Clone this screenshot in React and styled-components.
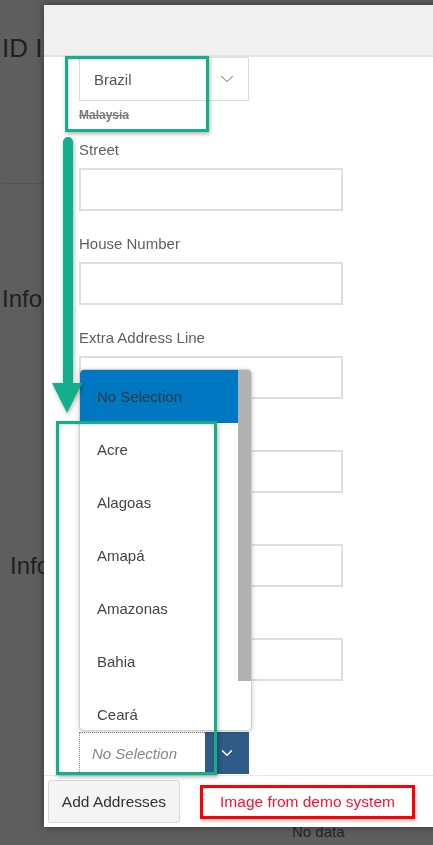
import React from 'react';
import styled, { createGlobalStyle } from 'styled-components';
import { ChevronDown } from 'lucide-react';

const GlobalStyle = createGlobalStyle`
  html, body {
    margin: 0;
    padding: 0;
    background: #fff;
    font-family: "Liberation Sans", Arial, sans-serif;
    overflow: hidden;
  }
`;

const GREEN = '#12ae8d';

// page behind the dialog
const Page = styled.div`
  height: 845px;
  padding-left: 2px;
  color: #5a5a5a;
`;

const PageTitle = styled.h1`
  margin: 32px 0 0;
  font-size: 26px;
  font-weight: 400;
  line-height: 32px;
  white-space: nowrap;
`;

const PageDivider = styled.hr`
  margin: 119px 0 0;
  width: 200px;
  border: 0;
  border-top: 1px solid #e2e2e2;
`;

const SectionTitle = styled.h2`
  margin: ${({ $top }) => $top}px 0 0 ${({ $indent }) => $indent || 0}px;
  font-size: 24px;
  font-weight: 400;
  line-height: 32px;
  white-space: nowrap;
`;

const NoData = styled.div`
  margin: 241px 0 0 290px;
  font-size: 15px;
  line-height: 18px;
  color: #666;
`;

const Backdrop = styled.div`
  position: fixed;
  inset: 0;
  background: rgba(0, 0, 0, 0.63);
`;

const Modal = styled.div`
  position: fixed;
  left: 44px;
  top: 5px;
  width: 420px;
  height: 822px;
  background: #fff;
  box-shadow: 0 0 8px rgba(0, 0, 0, 0.45);
  display: flex;
  flex-direction: column;
`;

const ModalHeader = styled.div`
  height: 50px;
  flex-shrink: 0;
  background: #f0f0f0;
  border-bottom: 2px solid #e4e4e4;
`;

const ModalBody = styled.div`
  flex: 1;
  position: relative;
  overflow: hidden;
  padding-left: 35px;
`;

const ModalFooter = styled.div`
  flex-shrink: 0;
  height: 52px;
  box-sizing: border-box;
  border-top: 1px solid #e6e6e6;
  padding: 5px 4px;
  display: flex;
  align-items: center;
  gap: 20px;
`;

const CountrySelect = styled.div`
  width: 170px;
  height: 44px;
  box-sizing: border-box;
  border: 1px solid #dcdcdc;
  display: flex;
  align-items: center;
  justify-content: space-between;
  padding: 0 10px 0 14px;
  font-size: 15px;
  color: #555;
`;

const OldValue = styled.div`
  margin-top: 6px;
  line-height: 16px;
  font-size: 12px;
  font-weight: 700;
  color: #7a7a7a;
  text-decoration: line-through;
`;

const FieldList = styled.div`
  margin-top: 19px;
`;

const Field = styled.div`
  margin-bottom: 25px;
`;

const Label = styled.div`
  height: 16px;
  line-height: 16px;
  margin-bottom: 10px;
  font-size: 15px;
  color: #5e5e5e;
  white-space: nowrap;
`;

const TextInput = styled.div`
  width: 264px;
  height: 43px;
  box-sizing: border-box;
  border: 2px solid #dedede;
  background: #fff;
`;

const RegionSelect = styled.div`
  width: 170px;
  height: 42px;
  display: flex;
`;

const RegionValue = styled.div`
  flex: 1;
  box-sizing: border-box;
  border: 1px dotted #8a8a8a;
  border-right: 0;
  display: flex;
  align-items: center;
  padding-left: 12px;
  font-size: 15px;
  font-style: italic;
  color: #888;
`;

const RegionButton = styled.div`
  width: 44px;
  background: #2f5b86;
  color: #fff;
  display: flex;
  align-items: center;
  justify-content: center;
`;

// open listbox over the form
const Listbox = styled.div`
  position: absolute;
  left: 35px;
  top: 312px;
  width: 173px;
  height: 362px;
  box-sizing: border-box;
  border: 1px solid #cfcfcf;
  border-radius: 5px;
  background: #fff;
  box-shadow: 0 1px 5px rgba(0, 0, 0, 0.2);
  overflow: hidden;
  display: flex;
`;

const Options = styled.ul`
  list-style: none;
  margin: 0;
  padding: 0;
  flex: 1;
`;

const Option = styled.li`
  height: 53px;
  display: flex;
  align-items: center;
  padding-left: 17px;
  font-size: 15px;
  color: ${({ $active }) => ($active ? '#2c3a47' : '#444')};
  background: ${({ $active }) => ($active ? '#0077c1' : 'transparent')};
`;

const ScrollTrack = styled.div`
  width: 13px;
  flex-shrink: 0;
`;

const ScrollThumb = styled.div`
  height: 311px;
  background: #b1b1b1;
`;

const AddButton = styled.button`
  width: 132px;
  height: 43px;
  border: 1px solid #d8d8d8;
  border-radius: 3px;
  background: #f4f4f4;
  font-family: inherit;
  font-size: 15.5px;
  color: #333;
`;

const DemoNote = styled.div`
  width: 215px;
  height: 34px;
  box-sizing: border-box;
  border: 3px solid #ff0000;
  display: flex;
  align-items: center;
  justify-content: center;
  font-size: 15.5px;
  color: #ff1030;
  box-shadow: 1px 2px 3px rgba(0, 0, 0, 0.25);
`;

// annotation marks drawn over the dialog
const Highlight = styled.div`
  position: absolute;
  left: ${({ $x }) => $x}px;
  top: ${({ $y }) => $y}px;
  width: ${({ $w }) => $w}px;
  height: ${({ $h }) => $h}px;
  box-sizing: border-box;
  border: 3px solid ${GREEN};
  box-shadow: 1px 2px 4px rgba(0, 0, 0, 0.3), inset 1px 1px 2px rgba(0, 0, 0, 0.15);
  pointer-events: none;
`;

const ArrowMark = styled.svg`
  position: absolute;
  left: 8px;
  top: 132px;
  filter: drop-shadow(1px 2px 2px rgba(0, 0, 0, 0.3));
`;

// labels of the lower fields sit under the open listbox, so they show no text
const fields = ['Street', 'House Number', 'Extra Address Line', '', '', ''];
const states = ['No Selection', 'Acre', 'Alagoas', 'Amapá', 'Amazonas', 'Bahia', 'Ceará'];

export default function App() {
  return (
    <>
      <GlobalStyle />
      <Page>
        <PageTitle>ID Info</PageTitle>
        <PageDivider />
        <SectionTitle $top={99}>Info</SectionTitle>
        <SectionTitle $top={235} $indent={8}>Info</SectionTitle>
        <NoData>No data</NoData>
      </Page>
      <Backdrop />
      <Modal>
        <ModalHeader />
        <ModalBody>
          <CountrySelect>
            Brazil
            <ChevronDown size={22} strokeWidth={1} color="#555" />
          </CountrySelect>
          <OldValue>Malaysia</OldValue>
          <FieldList>
            {fields.map((f, i) => (
              <Field key={i}>
                <Label>{f}</Label>
                <TextInput />
              </Field>
            ))}
            <Field>
              <Label />
              <RegionSelect>
                <RegionValue>No Selection</RegionValue>
                <RegionButton>
                  <ChevronDown size={18} strokeWidth={2} />
                </RegionButton>
              </RegionSelect>
            </Field>
          </FieldList>
          <Listbox>
            <Options>
              {states.map((s, i) => (
                <Option key={s} $active={i === 0}>{s}</Option>
              ))}
            </Options>
            <ScrollTrack>
              <ScrollThumb />
            </ScrollTrack>
          </Listbox>
        </ModalBody>
        <ModalFooter>
          <AddButton>Add Addresses</AddButton>
          <DemoNote>Image from demo system</DemoNote>
        </ModalFooter>

        <Highlight $x={21} $y={51} $w={144} $h={76} />
        <Highlight $x={12} $y={416} $w={161} $h={354} />
        <ArrowMark width="32" height="278" viewBox="0 0 32 278">
          <rect x="11" y="0" width="10" height="250" rx="5" fill={GREEN} />
          <polygon points="0,246 30,246 15,276" fill={GREEN} />
        </ArrowMark>
      </Modal>
    </>
  );
}
